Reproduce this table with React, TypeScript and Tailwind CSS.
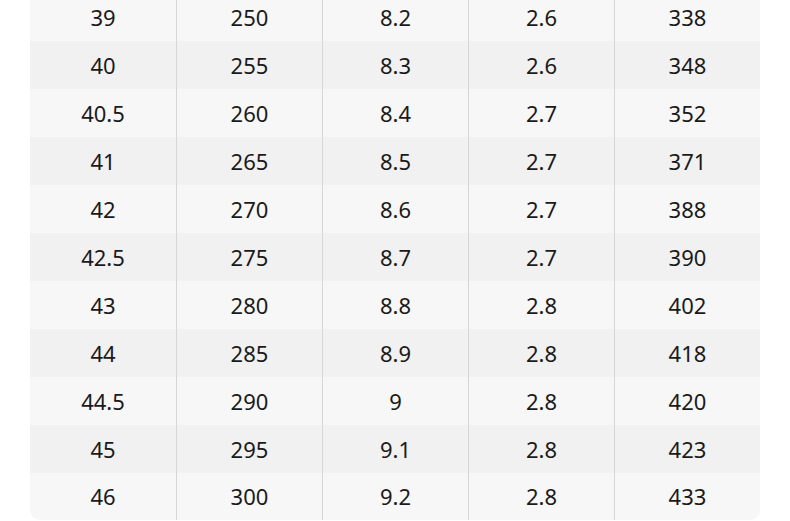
const rows: string[][] = [
  ['39', '250', '8.2', '2.6', '338'],
  ['40', '255', '8.3', '2.6', '348'],
  ['40.5', '260', '8.4', '2.7', '352'],
  ['41', '265', '8.5', '2.7', '371'],
  ['42', '270', '8.6', '2.7', '388'],
  ['42.5', '275', '8.7', '2.7', '390'],
  ['43', '280', '8.8', '2.8', '402'],
  ['44', '285', '8.9', '2.8', '418'],
  ['44.5', '290', '9', '2.8', '420'],
  ['45', '295', '9.1', '2.8', '423'],
  ['46', '300', '9.2', '2.8', '433'],
];

export default function App() {
  return (
    <div className="h-[521px] w-[790px] overflow-hidden bg-white font-['Noto_Sans',sans-serif]">
      <div className="mx-[30px] -mt-[7px] overflow-hidden rounded-b-[10px]">
        {rows.map((row, i) => (
          <div
            key={i}
            className={`grid grid-cols-5 ${i === rows.length - 1 ? 'h-[47px]' : 'h-[48px]'} ${i % 2 === 0 ? 'bg-[#f7f7f7]' : 'bg-[#f1f1f1]'}`}
          >
            {row.map((cell, j) => (
              <div
                key={j}
                className={`flex items-center justify-center text-[22px] text-[#1a1a1a] ${j > 0 ? 'border-l border-[#d6d6d6]' : ''}`}
              >
                {cell}
              </div>
            ))}
          </div>
        ))}
      </div>
    </div>
  );
}
